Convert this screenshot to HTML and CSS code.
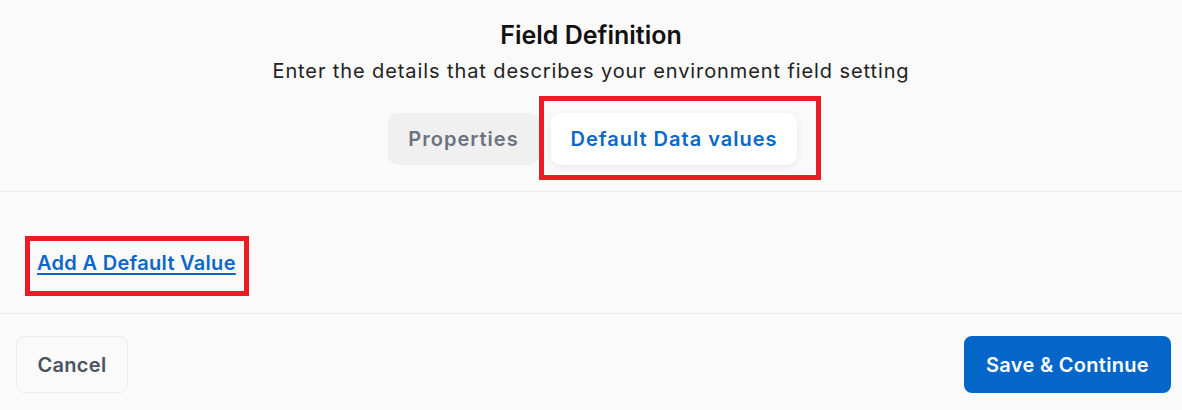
FILE: index.html
```html
<!DOCTYPE html>
<html lang="en">
<head>
<meta charset="utf-8">
<title>Field Definition</title>
<link rel="stylesheet" href="styles.css">
</head>
<body>
<div class="page">
  <header class="head">
    <h1 class="title">Field Definition</h1>
    <p class="subtitle">Enter the details that describes your environment field setting</p>
    <div class="tabs">
      <button class="tab">Properties</button>
      <div class="tab-wrap">
        <button class="tab tab-active">Default Data values</button>
        <span class="mark mark-tab"></span>
      </div>
    </div>
  </header>
  <main class="body">
    <div class="link-wrap">
      <a class="add-link" href="#">Add A Default Value</a>
      <span class="mark mark-link"></span>
    </div>
  </main>
  <footer class="foot">
    <button class="btn btn-cancel">Cancel</button>
    <button class="btn btn-save">Save &amp; Continue</button>
  </footer>
</div>
</body>
</html>
```

FILE: styles.css
```css
* { box-sizing: border-box; }
html, body { margin: 0; padding: 0; }
body {
  background: #fafafa;
  font-family: Inter, "Noto Sans", sans-serif;
  color: #111;
  width: 1182px;
  height: 410px;
  overflow: hidden;
}
.page { display: flex; flex-direction: column; }
.head {
  display: flex;
  flex-direction: column;
  align-items: center;
  padding-top: 19px;
  padding-bottom: 26px;
  border-bottom: 1px solid #ececec;
}
.title {
  margin: 0;
  font-size: 25px;
  line-height: 32px;
  font-weight: 600;
  color: #111;
}
.subtitle {
  margin: 6px 0 0;
  font-size: 20px;
  line-height: 28px;
  font-weight: 400;
  letter-spacing: 0.9px;
  color: #222;
}
.tabs {
  display: flex;
  gap: 12px;
  margin-top: 28px;
  margin-left: 3px;
}
.tab {
  font-family: inherit;
  font-size: 20px;
  font-weight: 600;
  height: 52px;
  border: none;
  border-radius: 10px;
  background: #f0f0f1;
  color: #6b7280;
  padding: 0;
  letter-spacing: 1px;
  width: 151px;
}
.tab-wrap { position: relative; }
.tab-active {
  width: 246px;
  background: #fff;
  color: #0b67c8;
  box-shadow: 0 2px 8px rgba(0,0,0,0.07);
}
.mark {
  position: absolute;
  border: 5px solid #ed1c24;
  pointer-events: none;
}
.mark-tab { left: -12px; top: -17px; right: -24px; bottom: -15px; }
.body {
  height: 122px;
  padding: 0 0 0 37px;
  border-bottom: 1px solid #ececec;
  display: flex;
  align-items: flex-start;
}
.link-wrap { position: relative; margin-top: 59px; }
.add-link {
  font-size: 20px;
  font-weight: 600;
  line-height: 24px;
  color: #0b67c8;
  text-decoration: underline;
  text-underline-offset: 3px;
  text-decoration-thickness: 2px;
  letter-spacing: 0.3px;
  display: block;
}
.mark-link { left: -12px; top: -15px; right: -13px; bottom: -21px; }
.foot {
  display: flex;
  justify-content: space-between;
  padding: 22px 11px 0 16px;
}
.btn {
  font-family: inherit;
  font-size: 20px;
  height: 57px;
  border-radius: 8px;
  cursor: pointer;
  padding: 0;
  letter-spacing: 0.3px;
}
.btn-cancel {
  width: 112px;
  background: #fafafa;
  border: 1px solid #ececec;
  color: #4b5260;
  font-weight: 600;
}
.btn-save {
  width: 207px;
  background: #0366c8;
  border: none;
  color: #fff;
  font-weight: 600;
}
```
